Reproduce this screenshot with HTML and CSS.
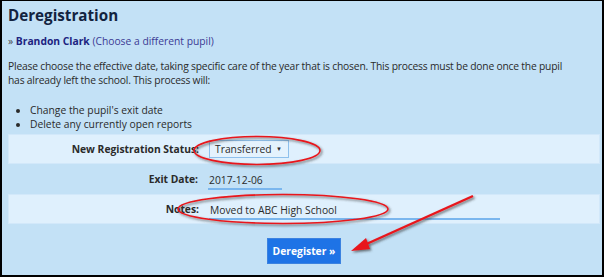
FILE: index.html
```html
<!DOCTYPE html>
<html>
<head>
<meta charset="utf-8">
<link rel="stylesheet" href="styles.css">
</head>
<body>
<div class="frame">
  <h1 class="title">Deregistration</h1>
  <div class="pupil"><span class="raquo">»</span> <a class="pupil-name">Brandon Clark</a> <a class="pupil-change">(Choose a different pupil)</a></div>
  <p class="intro">Please choose the effective date, taking specific care of the year that is chosen. This process must be done once the pupil has already left the school. This process will:</p>
  <ul class="steps">
    <li>Change the pupil's exit date</li>
    <li>Delete any currently open reports</li>
  </ul>
  <div class="form">
    <div class="row light">
      <div class="label">New Registration Status:</div>
      <div class="value"><div class="select"><span>Transferred</span><span class="caret">▼</span></div></div>
    </div>
    <div class="row">
      <div class="label">Exit Date:</div>
      <div class="value"><div class="field date">2017-12-06</div></div>
    </div>
    <div class="row light">
      <div class="label">Notes:</div>
      <div class="value"><div class="field notes">Moved to ABC High School</div></div>
    </div>
  </div>
  <div class="actions"><button class="btn">Deregister »</button></div>
  <svg class="annot" width="604" height="277" viewBox="0 0 604 277">
    <defs>
      <filter id="sh" x="-20%" y="-20%" width="140%" height="140%">
        <feDropShadow dx="1.5" dy="1.5" stdDeviation="0.8" flood-color="#333" flood-opacity="0.7"/>
      </filter>
    </defs>
    <g filter="url(#sh)" fill="none" stroke="#e8141b" stroke-width="1.6">
      <ellipse cx="257" cy="150.5" rx="63" ry="14"/>
      <ellipse cx="283" cy="209" rx="105" ry="14.5"/>
      <line x1="473" y1="196" x2="362" y2="246" stroke-width="2.4"/>
      <polygon points="351,251 366,238 370,249" fill="#e8141b" stroke="none"/>
    </g>
  </svg>
</div>
</body>
</html>
```
FILE: styles.css
```css
* { box-sizing: border-box; }
html, body { margin: 0; padding: 0; }
body { width: 604px; height: 277px; overflow: hidden; font-family: "Open Sans", sans-serif; }
.frame {
  position: relative;
  width: 604px; height: 277px;
  background: #c3e1f6;
  border-style: solid; border-color: #000;
  border-width: 1px 2px 2px 2px;
  padding: 0 3px 0 6px;
  color: #2a2a2a;
  font-size: 10.3px;
}
.title { margin: 0; padding-top: 4px; font-size: 15.2px; font-weight: 700; color: #12233f; line-height: 20px; }
.pupil { margin-top: 9px; line-height: 14px; }
.raquo { color: #444; }
.pupil-name { color: #1d2380; font-weight: 700; }
.pupil-change { color: #3b3a94; }
.intro { margin: 11px 0 0 0; line-height: 14px; max-width: 565px; letter-spacing: -0.2px; }
.steps { margin: 16px 0 0 0; padding-left: 22px; line-height: 14px; }
.form { margin-top: 3px; width: 592px; }
.row { display: flex; align-items: center; height: 30px; }
.row.light { background: #dff0fd; border: 1px solid #d2e8fa; }
.label { width: 198px; text-align: right; font-weight: 700; padding-right: 8px; }
.value { padding-left: 2px; flex: 1; }
.select { display: inline-flex; align-items: center; justify-content: space-between; width: 80px; height: 18px; border: 1px solid #8ec0ec; background: #e4f2fd; padding: 0 6px 0 5px; }
.caret { font-size: 6px; }
.field { border-bottom: 2px solid #7ab6ee; padding: 4px 0 1px 1px; line-height: 14px; }
.date { width: 74px; }
.notes { width: 291px; }
.actions { display: flex; justify-content: flex-start; padding-left: 259px; margin-top: 14px; }
.btn { width: 74px; height: 26px; background: #1e73e6; color: #fff; border: 1px solid #3b82e0; font-family: "Open Sans", sans-serif; font-weight: 700; font-size: 10.3px; padding: 0; }
.annot { position: absolute; left: -2px; top: -1px; pointer-events: none; }
```
